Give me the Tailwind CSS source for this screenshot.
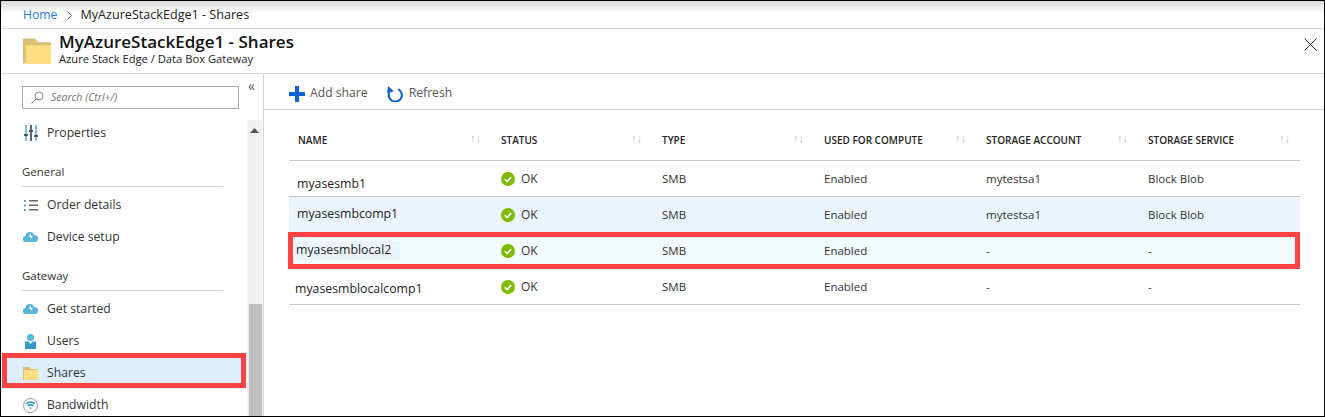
<!DOCTYPE html>
<html lang="en">
<head>
<meta charset="UTF-8" />
<title>MyAzureStackEdge1 - Shares</title>
<script src="https://cdn.jsdelivr.net/npm/@tailwindcss/browser@4"></script>
</head>
<body class="bg-white">
<div class="relative w-[1325px] h-[417px] overflow-hidden border border-black bg-white font-['Open_Sans',sans-serif] text-[12px] text-[#333]">

  <!-- Breadcrumb -->
  <div class="h-[28px] flex items-center pl-[22px] pt-[2px] border-b border-[#d4d4d4] bg-gradient-to-b from-[#d9d9d9] via-white via-[45%] to-white">
    <span class="text-[#2b79d6] text-[12.2px]">Home</span>
    <svg class="ml-[9px] w-[7px] h-[9px]" viewBox="0 0 7 9" fill="none" stroke="#666"><path d="M1.500 .5l4 4-4 4" /></svg>
    <span class="ml-[7px] text-[#222] text-[12.6px]">MyAzureStackEdge1 - Shares</span>
  </div>

  <!-- Blade header -->
  <div class="h-[45px] flex items-center pl-[22px] border-b border-[#d4d4d4] relative">
    <svg class="w-[28px] h-[26px]" viewBox="0 0 29 26"><path d="M0 0h12l4 4h13v22H0z" fill="#d9bf73" /><path d="M3 7h26v19H3z" fill="#ffdd80" /></svg>
    <div class="ml-[8px] -mt-[4px]">
      <div class="text-[17px] leading-[20px] font-semibold text-[#111]">MyAzureStackEdge1 - Shares</div>
      <div class="text-[11.2px] leading-[14px] text-[#222]">Azure Stack Edge / Data Box Gateway</div>
    </div>
    <svg class="absolute right-[7px] top-[9px] w-[13px] h-[13px]" viewBox="0 0 13 13" stroke="#333" fill="none"><path d="M.5.5l12 12M12.500.5l-12 12" /></svg>
  </div>

  <div class="flex h-[343px]">
    <!-- Sidebar -->
    <aside class="relative w-[263px] shrink-0 border-r border-[#d4d4d4] overflow-hidden">
      <span class="absolute left-[247px] top-[5px] text-[14px] leading-[14px] text-[#555]">«</span>
      <div class="ml-[21px] mt-[12px] w-[217px] h-[23px] border border-[#a9a9a9] flex items-center pl-[8px] gap-[7px] text-[#777] italic text-[10.5px]">
        <svg class="w-[13px] h-[13px]" viewBox="0 0 13 13" fill="none" stroke="#888"><circle cx="8" cy="5" r="4" /><path d="M5 8l-4.500 4.500" /></svg>
        <span>Search (Ctrl+/)</span>
      </div>

      <div class="w-[246px] pt-[8px] text-[12.2px]">
        <div class="h-[32px] flex items-center pl-[23px] gap-[9px]">
          <svg class="w-[14px] h-[16px]" viewBox="0 0 14 16"><path d="M1 0h2v16H1z" fill="#7fbfe6" /><path d="M6 0h2v16H6z" fill="#666" /><path d="M11 0h2v16h-2z" fill="#7fbfe6" /><path d="M0 9h4v2H0zM5 5h4v2H5zM10 10h4v2h-4z" fill="#555" /></svg>
          <span>Properties</span>
        </div>
        <div class="mt-[15px] mb-[2px] ml-[21px] w-[201px] h-[23px] border-b border-[#d4d4d4] text-[11.5px] leading-[16px] text-[#333]">General</div>
        <div class="h-[32px] flex items-center pl-[23px] gap-[9px]">
          <svg class="w-[14px] h-[11px]" viewBox="0 0 14 11"><path d="M0 0h2v2H0zM0 4.500h2v2H0zM0 9h2v2H0z" fill="#4aa8e0" /><path d="M5 0h9v1.500H5zM5 4.500h9V6H5zM5 9h9v1.500H5z" fill="#666" /></svg>
          <span>Order details</span>
        </div>
        <div class="h-[32px] flex items-center pl-[22px] gap-[9px]">
          <svg class="w-[15px] h-[10px]" viewBox="0 0 15 10"><path d="M3 10a3 3 0 0 1-.500-6A4.500 4.500 0 0 1 7 0a4 4 0 0 1 4 3 3.500 3.500 0 0 1 1 7z" fill="#59b4d9" /><path d="M8 1L6 5h2L7 8l3-4H8z" fill="#fff" /></svg>
          <span>Device setup</span>
        </div>
        <div class="mt-[15px] mb-[2px] ml-[21px] w-[201px] h-[23px] border-b border-[#d4d4d4] text-[11.5px] leading-[16px] text-[#333]">Gateway</div>
        <div class="h-[32px] flex items-center pl-[22px] gap-[9px]">
          <svg class="w-[15px] h-[10px]" viewBox="0 0 15 10"><path d="M3 10a3 3 0 0 1-.500-6A4.500 4.500 0 0 1 7 0a4 4 0 0 1 4 3 3.500 3.500 0 0 1 1 7z" fill="#59b4d9" /><path d="M8 1L6 5h2L7 8l3-4H8z" fill="#fff" /></svg>
          <span>Get started</span>
        </div>
        <div class="h-[32px] flex items-center pl-[23px] gap-[10px]">
          <svg class="w-[13px] h-[15px]" viewBox="0 0 13 15"><circle cx="6.500" cy="3.500" r="3.500" fill="#59b4d9" /><path d="M1 7.500h3.500L6.500 10l2-2.500H12V15H1z" fill="#3999c6" /></svg>
          <span>Users</span>
        </div>
        <div class="h-[32px] flex items-center pl-[21px] gap-[9px] ml-[1px] bg-[#ddeefc]">
          <svg class="w-[15px] h-[13px]" viewBox="0 0 15 13"><path d="M0 0h6l2 2h7v11H0z" fill="#d9bf73" /><path d="M1 3h14v10H1z" fill="#ffdd80" /></svg>
          <span>Shares</span>
        </div>
        <div class="h-[32px] flex items-center pl-[22px] gap-[9px]">
          <svg class="w-[15px] h-[15px]" viewBox="0 0 15 15" fill="none"><circle cx="7.500" cy="7.500" r="7" stroke="#999" /><path d="M3 6c3-2.500 6-2.500 9 0M4.500 8c2-1.500 4-1.500 6 0" stroke="#3999c6" stroke-width="1.500" /><path d="M6 9.500h3L7.500 11.500z" fill="#3999c6" /></svg>
          <span>Bandwidth</span>
        </div>
      </div>

      <!-- Scrollbar -->
      <div class="absolute left-[246px] top-[46px] bottom-0 w-[15px] bg-[#f0f0f0]">
        <svg class="absolute left-[3px] top-[8px] w-[9px] h-[5px]" viewBox="0 0 9 5"><path d="M4.500 0L9 5H0z" fill="#555" /></svg>
        <div class="absolute left-[2px] right-0 top-[184px] bottom-0 bg-[#bfbfbf]"></div>
      </div>
    </aside>

    <!-- Main -->
    <main class="flex-1 min-w-0">
      <div class="h-[36px] flex items-center pl-[25px] pt-[4px] border-b border-[#d4d4d4] text-[#555] text-[12.2px]">
        <svg class="w-[16px] h-[16px]" viewBox="0 0 16 16"><path d="M6 0h4v6h6v4h-6v6H6v-6H0V6h6z" fill="#0f62d6" /></svg>
        <span class="ml-[5px]">Add share</span>
        <svg class="ml-[19px] w-[16px] h-[16px]" viewBox="0 0 15 15" fill="none"><path d="M4 3.500a6.200 6.200 0 1 0 6.500-.6" stroke="#1565c8" stroke-width="2" /><path d="M1 0l5.500 5L0 6.500z" fill="#1565c8" /></svg>
        <span class="ml-[6px]">Refresh</span>
      </div>

      <div class="ml-[25px] w-[1011px] text-[11.5px] text-[#333]">
        <div class="grid grid-cols-[202px_161px_repeat(4,162px)] h-[51px] border-b border-[#c8c8c8] items-center pt-[10px] text-[10px] font-semibold text-[#222]">
          <div class="pl-[9px] pr-[10px] flex justify-between"><span>NAME</span><span class="text-[#bdbdbd] text-[11px] font-normal -mt-[3px]">↑↓</span></div>
          <div class="pl-[10px] pr-[10px] flex justify-between"><span>STATUS</span><span class="text-[#bdbdbd] text-[11px] font-normal -mt-[3px]">↑↓</span></div>
          <div class="pl-[10px] pr-[10px] flex justify-between"><span>TYPE</span><span class="text-[#bdbdbd] text-[11px] font-normal -mt-[3px]">↑↓</span></div>
          <div class="pl-[10px] pr-[10px] flex justify-between"><span>USED FOR COMPUTE</span><span class="text-[#bdbdbd] text-[11px] font-normal -mt-[3px]">↑↓</span></div>
          <div class="pl-[10px] pr-[10px] flex justify-between"><span>STORAGE ACCOUNT</span><span class="text-[#bdbdbd] text-[11px] font-normal -mt-[3px]">↑↓</span></div>
          <div class="pl-[10px] pr-[10px] flex justify-between"><span>STORAGE SERVICE</span><span class="text-[#bdbdbd] text-[11px] font-normal -mt-[3px]">↑↓</span></div>
        </div>

        <div class="grid grid-cols-[202px_161px_repeat(4,162px)] h-[36px] border-b border-[#c8c8c8] items-center">
          <div class="pl-[8px] pt-[12px] text-[12.3px] text-[#222]">myasesmb1</div>
          <div class="pl-[10px] flex items-center gap-[6px] text-[12px]"><svg class="w-[14px] h-[14px]" viewBox="0 0 14 14"><circle cx="7" cy="7" r="7" fill="#7fba00" /><path d="M3.800 7.200l2.300 2.300 4.100-4.400" stroke="#fff" stroke-width="1.600" fill="none" /></svg>OK</div>
          <div class="pl-[10px]">SMB</div><div class="pl-[10px]">Enabled</div><div class="pl-[10px]">mytestsa1</div><div class="pl-[10px]">Block Blob</div>
        </div>
        <div class="grid grid-cols-[202px_161px_repeat(4,162px)] h-[36px] border-b border-[#c8c8c8] items-center bg-[#ebf4fd]">
          <div class="pl-[8px] text-[12.3px] text-[#222]">myasesmbcomp1</div>
          <div class="pl-[10px] flex items-center gap-[6px] text-[12px]"><svg class="w-[14px] h-[14px]" viewBox="0 0 14 14"><circle cx="7" cy="7" r="7" fill="#7fba00" /><path d="M3.800 7.200l2.300 2.300 4.100-4.400" stroke="#fff" stroke-width="1.600" fill="none" /></svg>OK</div>
          <div class="pl-[10px]">SMB</div><div class="pl-[10px]">Enabled</div><div class="pl-[10px]">mytestsa1</div><div class="pl-[10px]">Block Blob</div>
        </div>
        <div class="grid grid-cols-[202px_161px_repeat(4,162px)] h-[36px] border-b border-[#c8c8c8] items-center bg-[#f4fbfe]">
          <div class="pl-[6px] text-[12.3px] text-[#222]"><span class="inline-block w-[105px] pl-[1px] bg-[#ebf4fd]">myasesmblocal2</span></div>
          <div class="pl-[10px] flex items-center gap-[6px] text-[12px]"><svg class="w-[14px] h-[14px]" viewBox="0 0 14 14"><circle cx="7" cy="7" r="7" fill="#7fba00" /><path d="M3.800 7.200l2.300 2.300 4.100-4.400" stroke="#fff" stroke-width="1.600" fill="none" /></svg>OK</div>
          <div class="pl-[10px]">SMB</div><div class="pl-[10px]">Enabled</div><div class="pl-[10px]">-</div><div class="pl-[10px]">-</div>
        </div>
        <div class="grid grid-cols-[202px_161px_repeat(4,162px)] h-[36px] border-b border-[#c8c8c8] items-center">
          <div class="pl-[6px] pt-[5px] text-[12.3px] text-[#222]">myasesmblocalcomp1</div>
          <div class="pl-[10px] flex items-center gap-[6px] text-[12px]"><svg class="w-[14px] h-[14px]" viewBox="0 0 14 14"><circle cx="7" cy="7" r="7" fill="#7fba00" /><path d="M3.800 7.200l2.300 2.300 4.100-4.400" stroke="#fff" stroke-width="1.600" fill="none" /></svg>OK</div>
          <div class="pl-[10px]">SMB</div><div class="pl-[10px]">Enabled</div><div class="pl-[10px]">-</div><div class="pl-[10px]">-</div>
        </div>
      </div>
    </main>
  </div>

  <!-- Red callouts drawn over the screenshot -->
  <div class="absolute left-[1px] top-[352px] w-[244px] h-[35px] border-[5px] border-[#ff4343]"></div>
  <div class="absolute left-[287px] top-[231px] w-[1012px] h-[37px] border-[5px] border-[#ff4343]"></div>
</div>
</body>
</html>
